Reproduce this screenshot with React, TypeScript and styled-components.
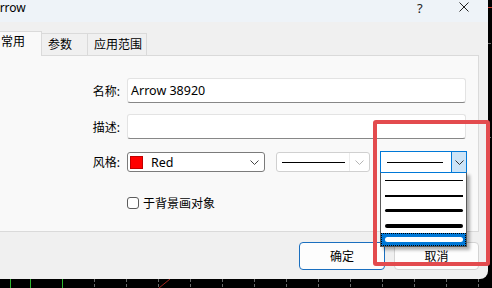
import React from 'react';
import styled, { createGlobalStyle } from 'styled-components';

const GlobalStyle = createGlobalStyle`
  html, body {
    margin: 0;
    padding: 0;
    background: #000;
  }
  body {
    font-family: "Noto Sans", "Noto Sans CJK SC", sans-serif;
    font-size: 12px;
    color: #000;
  }
`;

const Page = styled.div`
  position: relative;
  width: 492px;
  height: 288px;
  overflow: hidden;
  background: #000;
`;

const Backdrop = styled.svg`
  position: absolute;
  left: 0;
  top: 0;
`;

const Dialog = styled.div`
  position: relative;
  margin-left: -15px;
  width: 503px;
  height: 279px;
  display: flex;
  flex-direction: column;
  background: #f0f0f0;
  border-bottom-right-radius: 8px;
`;

const TitleBar = styled.div`
  height: 22px;
  display: flex;
  align-items: flex-start;
  padding: 1px 0 0 7px;
  background: #eef3f8;
  box-sizing: border-box;
`;

const Title = styled.div`
  flex: 1;
  line-height: 14px;
  font-size: 12px;
`;

const Help = styled.div`
  width: 7px;
  margin-right: 35px;
  line-height: 14px;
  font-size: 13px;
  color: #222;
`;

const Close = styled.svg`
  margin-top: 1px;
  margin-right: 19px;
`;

const Body = styled.div`
  padding: 0 9px;
`;

const TabRow = styled.div`
  height: 33px;
  display: flex;
  align-items: flex-end;
`;

const Tab = styled.div<{ $active?: boolean; $w: number }>`
  position: relative;
  box-sizing: border-box;
  width: ${(p) => p.$w}px;
  height: ${(p) => (p.$active ? 25 : 22)}px;
  margin-bottom: ${(p) => (p.$active ? -1 : 0)}px;
  padding-left: 6px;
  line-height: ${(p) => (p.$active ? 20 : 22)}px;
  background: ${(p) => (p.$active ? '#f9f9f9' : '#f0f0f0')};
  border: 1px solid #dadada;
  border-bottom: none;
  border-left: ${(p) => (p.$active ? '1px solid #dadada' : 'none')};
  z-index: ${(p) => (p.$active ? 1 : 0)};
`;

const Panel = styled.div`
  box-sizing: border-box;
  height: 177px;
  padding: 0 12px 0 0;
  background: #f9f9f9;
  border: 1px solid #dadada;
`;

const Row = styled.div<{ $top: number; $h: number }>`
  display: grid;
  grid-template-columns: 125px 1fr;
  column-gap: 7px;
  align-items: center;
  margin-top: ${(p) => p.$top}px;
  height: ${(p) => p.$h}px;
`;

const Label = styled.div`
  text-align: right;
`;

const TextInput = styled.div`
  box-sizing: border-box;
  height: 25px;
  padding-left: 3px;
  display: flex;
  align-items: center;
  background: #fff;
  border: 1px solid #e3e3e3;
  border-bottom-color: #878787;
  border-radius: 3px;
  font-size: 12.5px;
`;

const Fields = styled.div`
  display: flex;
  align-items: center;
`;

const Combo = styled.div<{ $w: number; $gap?: number; $border: string; $h: number }>`
  position: relative;
  flex-shrink: 0;
  box-sizing: border-box;
  width: ${(p) => p.$w}px;
  height: ${(p) => p.$h}px;
  margin-left: ${(p) => p.$gap ?? 0}px;
  display: flex;
  align-items: center;
  background: #fff;
  border: 1px solid ${(p) => p.$border};
  border-radius: ${(p) => (p.$h > 21 ? 0 : 3)}px;
`;

const Swatch = styled.span`
  width: 13px;
  height: 13px;
  margin-left: 2px;
  background: #f00;
  box-shadow: inset 0 0 0 1px #c00000;
`;

const ComboText = styled.span`
  flex: 1;
  margin-left: 8px;
  font-size: 12.5px;
`;

const LineBox = styled.div<{ $pad: string }>`
  flex: 1;
  display: flex;
  align-items: center;
  padding: ${(p) => p.$pad};
`;

const Stroke = styled.div<{ $w: number; $color?: string }>`
  flex: 1;
  height: ${(p) => p.$w}px;
  background: ${(p) => p.$color ?? '#000'};
  border-radius: ${(p) => (p.$w > 2 ? p.$w / 2 : 0)}px;
`;

const ChevronSlot = styled.span<{ $left?: number }>`
  display: flex;
  margin: 0 5px 0 ${(p) => p.$left ?? 0}px;
`;

const Divider = styled.span`
  width: 1px;
  height: 18px;
  background: #ececec;
`;

const DropButton = styled.div`
  align-self: stretch;
  width: 14px;
  display: flex;
  align-items: center;
  justify-content: center;
  background: #cce4f7;
  border-left: 1px solid #0078d7;
`;

const List = styled.div`
  position: absolute;
  top: 100%;
  left: -1px;
  width: 87px;
  box-sizing: border-box;
  background: #fff;
  border: 1px solid #5a5a5a;
  border-top-color: #0078d7;
  box-shadow: 3px 3px 3px rgba(0, 0, 0, 0.3);
  z-index: 5;
`;

const ListItem = styled.div<{ $selected?: boolean; $h: number }>`
  height: ${(p) => p.$h}px;
  display: flex;
  align-items: center;
  padding: 0 3px 0 4px;
  box-sizing: border-box;
  background: ${(p) => (p.$selected ? '#0078d7' : '#fff')};
  outline: ${(p) => (p.$selected ? '1px dotted #000' : 'none')};
  outline-offset: -1px;
`;

const CheckWrap = styled.div`
  display: flex;
  align-items: center;
  gap: 4px;
`;

const CheckBox = styled.span`
  box-sizing: border-box;
  width: 12px;
  height: 12px;
  background: #fff;
  border: 1px solid #5c5c5c;
  border-radius: 3px;
`;

const Footer = styled.div`
  display: flex;
  justify-content: flex-end;
  gap: 9px;
  padding: 10px 9px 0 0;
`;

const Button = styled.div<{ $primary?: boolean; $w: number }>`
  box-sizing: border-box;
  width: ${(p) => p.$w}px;
  height: 28px;
  display: flex;
  align-items: center;
  justify-content: center;
  background: #fdfdfd;
  border: 1px solid ${(p) => (p.$primary ? '#1a6fbf' : '#d3d3d3')};
  border-radius: 4px;
`;

const Annotation = styled.div`
  position: absolute;
  left: 373px;
  top: 120px;
  width: 117px;
  height: 146px;
  box-sizing: border-box;
  border: 4px solid #e34b4e;
  border-radius: 3px;
  z-index: 10;
  pointer-events: none;
`;

const ChevronIcon = ({ color }: { color: string }) => (
  <svg width={9} height={5} viewBox="0 0 9 5">
    <polyline points="0.5,0.5 4.5,4.5 8.5,0.5" fill="none" stroke={color} strokeWidth={1} />
  </svg>
);

const ChartBackdrop = () => {
  const ticks: number[] = [];
  for (let x = 94; x < 492; x += 32) ticks.push(x);
  return (
    <Backdrop width={492} height={288}>
      {[10.5, 30.5, 62.5].map((x) => (
        <line key={x} x1={x} y1={279} x2={x} y2={288} stroke="#2fb52f" strokeWidth={1} />
      ))}
      {ticks.map((x) => (
        <line key={x} x1={x + 0.5} y1={279} x2={x + 0.5} y2={288} stroke="#6b6b6b" strokeWidth={1} strokeDasharray="3 2" />
      ))}
      <line x1={159} y1={288} x2={170} y2={279} stroke="#a3271f" strokeWidth={1} />
      <line x1={488} y1={7.5} x2={492} y2={7.5} stroke="#c0392b" strokeWidth={1} />
      <line x1={488} y1={43.5} x2={491} y2={43.5} stroke="#6b6b6b" strokeWidth={1} />
      <line x1={488} y1={137.5} x2={491} y2={137.5} stroke="#6b6b6b" strokeWidth={1} />
    </Backdrop>
  );
};

const lineItems = [1, 2, 3, 4];

export default function App() {
  return (
    <Page>
      <GlobalStyle />
      <ChartBackdrop />
      <Dialog>
        <TitleBar>
          <Title>Arrow</Title>
          <Help>?</Help>
          <Close width={10} height={10} viewBox="0 0 10 10">
            <path d="M0.5 0.5 L9.5 9.5 M9.5 0.5 L0.5 9.5" stroke="#222" strokeWidth={1} />
          </Close>
        </TitleBar>
        <Body>
          <TabRow>
            <Tab $active $w={48}>常用</Tab>
            <Tab $w={46}>参数</Tab>
            <Tab $w={59}>应用范围</Tab>
          </TabRow>
          <Panel>
            <Row $top={22} $h={25}>
              <Label>名称:</Label>
              <TextInput>Arrow 38920</TextInput>
            </Row>
            <Row $top={11} $h={25}>
              <Label>描述:</Label>
              <TextInput />
            </Row>
            <Row $top={12} $h={22}>
              <Label>风格:</Label>
              <Fields>
                <Combo $w={138} $h={20} $border="#7b7b7b">
                  <Swatch />
                  <ComboText>Red</ComboText>
                  <ChevronSlot>
                    <ChevronIcon color="#444" />
                  </ChevronSlot>
                </Combo>
                <Combo $w={94} $h={20} $gap={11} $border="#d0d0d0">
                  <LineBox $pad="0 4px 0 5px">
                    <Stroke $w={1} />
                  </LineBox>
                  <Divider />
                  <ChevronSlot $left={5}>
                    <ChevronIcon color="#b5b5b5" />
                  </ChevronSlot>
                </Combo>
                <Combo $w={87} $h={22} $gap={10} $border="#0078d7">
                  <LineBox $pad="0 8px 0 6px">
                    <Stroke $w={1} />
                  </LineBox>
                  <DropButton>
                    <ChevronIcon color="#333" />
                  </DropButton>
                  <List>
                    {lineItems.map((w) => (
                      <ListItem key={w} $h={15}>
                        <Stroke $w={w} />
                      </ListItem>
                    ))}
                    <ListItem $selected $h={13}>
                      <Stroke $w={5} $color="#fff" />
                    </ListItem>
                  </List>
                </Combo>
              </Fields>
            </Row>
            <Row $top={21} $h={12}>
              <span />
              <CheckWrap>
                <CheckBox />
                <span>于背景画对象</span>
              </CheckWrap>
            </Row>
          </Panel>
        </Body>
        <Footer>
          <Button $primary $w={86}>确定</Button>
          <Button $w={85}>取消</Button>
        </Footer>
      </Dialog>
      <Annotation />
    </Page>
  );
}
